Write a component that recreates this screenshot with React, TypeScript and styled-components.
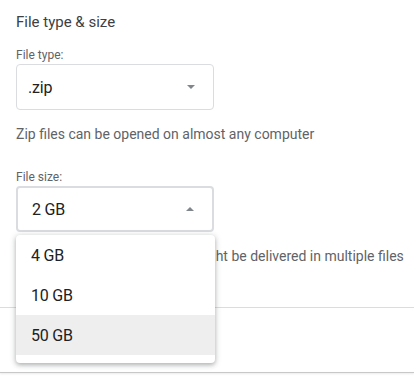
import styled, { createGlobalStyle } from "styled-components";

const Global = createGlobalStyle`
  body {
    margin: 0;
    background: #fff;
    font-family: Roboto, "Noto Sans", Arial, sans-serif;
  }
`

const Page = styled.div`
  width: 414px;
  height: 380px;
  overflow: hidden;
  display: flex;
  flex-direction: column;
`

const Section = styled.div`
  padding: 12px 16px 0;
  display: flex;
  flex-direction: column;
`

const Title = styled.div`
  font-size: 15px;
  line-height: 20px;
  color: #3c4043;
  margin-bottom: 15px;
`

const Field = styled.div`
  display: flex;
  flex-direction: column;
  & + & {
    margin-top: 25px;
  }
`

const Label = styled.div`
  font-size: 12px;
  line-height: 16px;
  color: #5f6368;
  margin-bottom: 1px;
`

const SelectWrap = styled.div`
  position: relative;
  width: 198px;
`

const Select = styled.div<{ open?: boolean }>`
  box-sizing: border-box;
  height: 46px;
  display: flex;
  align-items: center;
  justify-content: space-between;
  padding: 0 18px 0 ${p => (p.open ? 14 : 11)}px;
  border: ${p => (p.open ? "2px solid #dadce0" : "1px solid #dadce0")};
  border-radius: 4px;
  font-size: 16px;
  letter-spacing: -0.2px;
  color: #202124;
`

const Arrow = styled.span<{ up?: boolean }>`
  width: 0;
  height: 0;
  border-left: 4px solid transparent;
  border-right: 4px solid transparent;
  ${p => (p.up ? "border-bottom: 4px solid #80868b;" : "border-top: 4px solid #80868b;")}
`

const Helper = styled.div`
  margin-top: 14px;
  font-size: 14px;
  line-height: 20px;
  color: #5f6368;
  white-space: nowrap;
`

const Menu = styled.ul`
  position: absolute;
  top: calc(100% + 3px);
  left: 0;
  right: -1px;
  margin: 0;
  padding: 0 0 8px;
  list-style: none;
  background: #fff;
  border-radius: 4px;
  box-shadow: 0 2px 4px rgba(60, 64, 67, 0.3), 0 1px 6px 1px rgba(60, 64, 67, 0.15);
  z-index: 2;
`

const Item = styled.li<{ active?: boolean }>`
  height: 40px;
  display: flex;
  align-items: center;
  padding: 0 15px;
  font-size: 16px;
  letter-spacing: -0.2px;
  color: #202124;
  background: ${p => (p.active ? "#eeeeee" : "transparent")};
`

const Divider = styled.div`
  margin-top: 41px;
  height: 1px;
  background: #dadce0;
`

const Footer = styled.div`
  margin-top: 64px;
  height: 1px;
  background: #c8c8c8;
  box-shadow: 0 1px 2px rgba(0, 0, 0, 0.12);
`

const sizes = ["4 GB", "10 GB", "50 GB"]

export default function App() {
  return (
    <Page>
      <Global />
      <Section>
        <Title>File type &amp; size</Title>
        <Field>
          <Label>File type:</Label>
          <SelectWrap>
            <Select>
              .zip
              <Arrow />
            </Select>
          </SelectWrap>
          <Helper>Zip files can be opened on almost any computer</Helper>
        </Field>
        <Field>
          <Label>File size:</Label>
          <SelectWrap>
            <Select open>
              2 GB
              <Arrow up />
            </Select>
            <Menu>
              {sizes.map((s, i) => (
                <Item key={s} active={i === 2}>{s}</Item>
              ))}
            </Menu>
          </SelectWrap>
          <Helper>Exports larger than this size might be delivered in multiple files</Helper>
        </Field>
      </Section>
      <Divider />
      <Footer />
    </Page>
  )
}
